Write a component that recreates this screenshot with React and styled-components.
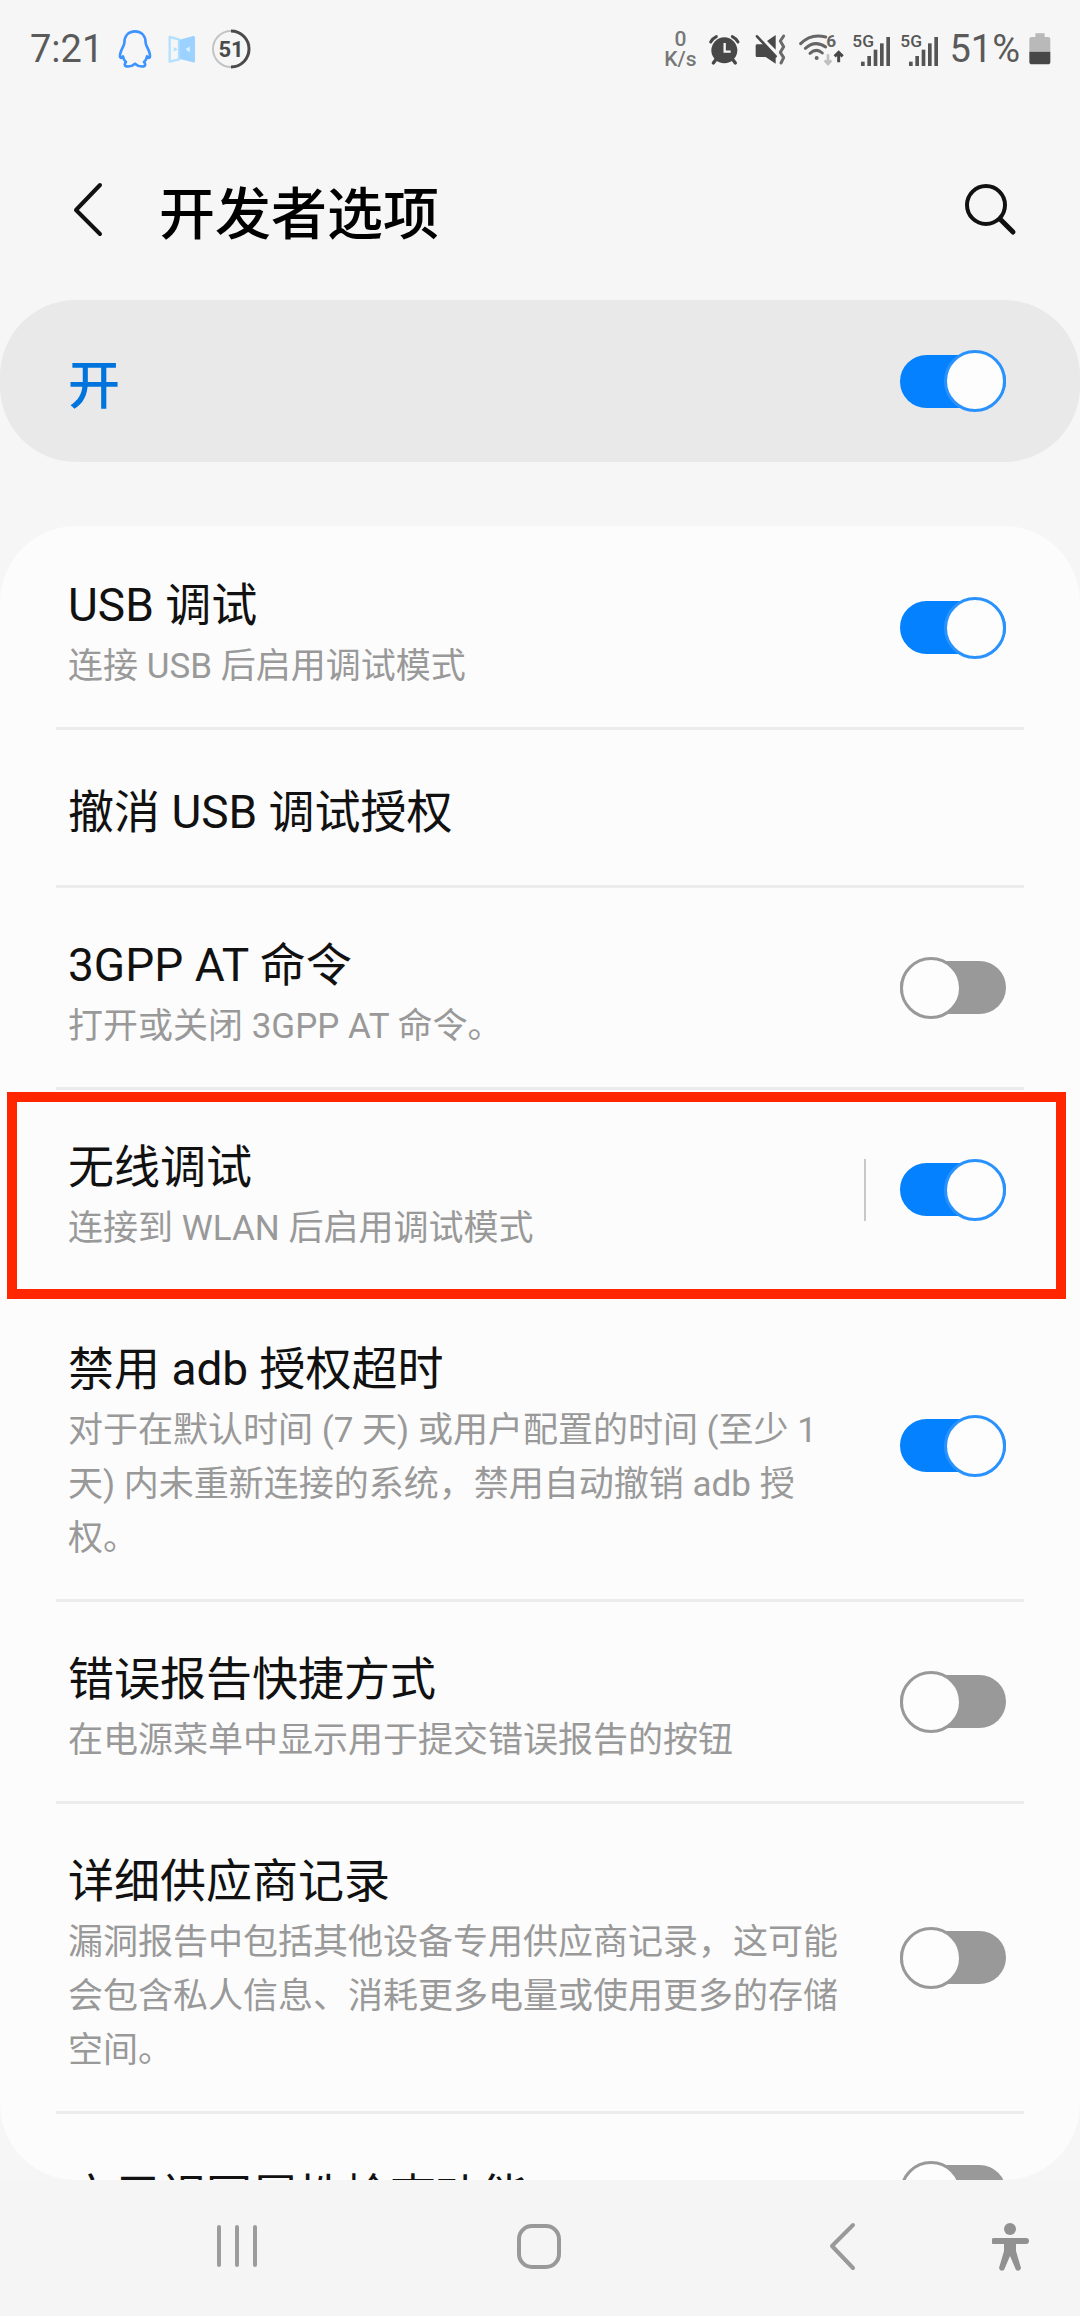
import React, { useState } from "react";
import styled, { createGlobalStyle } from "styled-components";

const GlobalStyle = createGlobalStyle`
  *,
  *::before,
  *::after {
    box-sizing: border-box;
  }

  body {
    margin: 0;
    background-color: #f6f6f6;
    font-family: Roboto, "Noto Sans CJK SC", sans-serif;
  }
`;

const ScreenStyled = styled.div`
  display: flex;
  flex-direction: column;
  height: 100vh;
`;

const StatusBarStyled = styled.div`
  flex: none;
  display: flex;
  justify-content: space-between;
  height: 98px;
  padding: 0 28px 0 30px;
  color: #5a5a5a;
  font-size: 38px;

  svg {
    display: block;
    flex: none;
  }
`;

const StatusGroup = styled.div`
  display: flex;
  align-items: center;
  gap: ${(props) => props.$gap}px;
`;

const NetSpeed = styled.div`
  width: 38px;
  text-align: center;
  font-size: 21px;
  font-weight: 500;
  line-height: 20px;
  color: #777;
`;

const HeaderStyled = styled.header`
  flex: none;
  display: flex;
  align-items: center;
  height: 202px;
  padding: 22px 62px 0 66px;

  h1 {
    flex: 1;
    margin: 0;
    padding: 10px 0 0 49px;
    color: #000;
    font-size: 56px;
    font-weight: 500;
    line-height: 72px;
  }
`;

const IconButton = styled.button`
  display: flex;
  align-items: center;
  justify-content: center;
  padding: 0;
  border: 0;
  background: none;
  color: ${(props) => props.$color || "#111"};
  cursor: pointer;
`;

const MasterBar = styled.label`
  flex: none;
  display: flex;
  align-items: center;
  justify-content: space-between;
  height: 162px;
  margin-bottom: 64px;
  padding: 0 74px 0 68px;
  border-radius: 76px;
  background-color: #e9e9e9;
  color: #0074dd;
  font-size: 52px;
  font-weight: 500;
`;

const Switch = styled.input.attrs({ type: "checkbox", role: "switch" })`
  appearance: none;
  flex: none;
  display: flex;
  align-items: center;
  justify-content: flex-start;
  width: 106px;
  height: 53px;
  margin: 0;
  border-radius: 27px;
  background-color: #999;
  cursor: pointer;

  &::after {
    content: "";
    flex: none;
    width: 62px;
    height: 62px;
    border: 3px solid #999;
    border-radius: 50%;
    background-color: #fdfdfd;
  }

  &:checked {
    justify-content: flex-end;
    background-color: #0381fe;
  }

  &:checked::after {
    border-color: #2a92fe;
  }
`;

const List = styled.ul`
  flex: 1;
  min-height: 0;
  margin: 0;
  padding: 2px 56px 0;
  overflow-y: auto;
  scrollbar-width: none;
  border-radius: 76px;
  background-color: #fcfcfc;
  list-style: none;
`;

const Row = styled.li`
  position: relative;
  display: flex;
  align-items: center;
  min-height: 158px;
  padding: 0 18px 0 12px;
  border-bottom: 3px solid #ececec;
`;

const RowText = styled.div`
  flex: 1;
  padding: 42px 36px 33px 0;

  label,
  button {
    display: block;
    padding: 0;
    border: 0;
    background: none;
    color: #111;
    font-family: inherit;
    font-size: 46px;
    line-height: 70px;
    text-align: left;
  }

  p {
    margin: 0;
    color: #999;
    font-size: 35px;
    line-height: 54px;
  }
`;

const Separator = styled.span`
  width: 2px;
  height: 62px;
  margin-right: 34px;
  background-color: #c8c8c8;
`;

const Highlight = styled.div`
  position: absolute;
  z-index: 1;
  top: 2px;
  right: -42px;
  bottom: -10px;
  left: -49px;
  border: 10px solid #ff2600;
  pointer-events: none;
`;

const NavBar = styled.nav`
  flex: none;
  display: grid;
  grid-template-columns: repeat(3, 1fr) 38px;
  height: 136px;
  padding: 0 50px 4px 86px;
  background-color: #f5f5f5;
`;

const settings = [
  {
    id: "usb",
    title: "USB 调试",
    desc: "连接 USB 后启用调试模式",
    on: true,
  },
  { id: "revoke", title: "撤消 USB 调试授权", action: true },
  {
    id: "at",
    title: "3GPP AT 命令",
    desc: "打开或关闭 3GPP AT 命令。",
    on: false,
  },
  {
    id: "wireless",
    title: "无线调试",
    desc: "连接到 WLAN 后启用调试模式",
    on: true,
    separator: true,
    highlight: true,
  },
  {
    id: "adb",
    title: "禁用 adb 授权超时",
    desc: "对于在默认时间 (7 天) 或用户配置的时间 (至少 1 天) 内未重新连接的系统，禁用自动撤销 adb 授权。",
    on: true,
  },
  {
    id: "bugreport",
    title: "错误报告快捷方式",
    desc: "在电源菜单中显示用于提交错误报告的按钮",
    on: false,
  },
  {
    id: "vendor",
    title: "详细供应商记录",
    desc: "漏洞报告中包括其他设备专用供应商记录，这可能会包含私人信息、消耗更多电量或使用更多的存储空间。",
    on: false,
  },
  { id: "attributes", title: "启用视图属性检查功能", on: false },
];

function QQIcon() {
  return (
    <svg width="36" height="40" viewBox="0 0 108 120" fill="none">
      <path
        d="M54 7C34 7 22 21 22 42C22 51 8 66 9 82C10 90 16 86 18 82C19 90 22 95 27 99C22 104 22 111 28 112C38 114 46 111 54 104C62 111 70 114 80 112C86 111 86 104 81 99C86 95 89 90 90 82C92 86 98 90 99 82C100 66 86 51 86 42C86 21 74 7 54 7Z"
        stroke="#3d93ff"
        strokeWidth="8"
        strokeLinejoin="round"
      />
    </svg>
  );
}

function BookIcon() {
  return (
    <svg width="30" height="40" viewBox="0 0 90 120" fill="none">
      <path d="M8 24L36 31V91L8 98Z" stroke="#b3e0ff" strokeWidth="7" strokeLinejoin="round" />
      <path d="M38 32L78 21Q84 20 84 26V96Q84 102 78 100L38 90Z" fill="#9bd2ff" />
      <path d="M20 54L32 61L20 68Z" fill="#b3e0ff" />
      <path d="M68 52L56 61L68 70Z" fill="#dff2ff" />
    </svg>
  );
}

function BatteryCircle() {
  return (
    <svg width="40" height="40" viewBox="0 0 40 40" fill="none">
      <circle cx="20" cy="20" r="18" stroke="#c4c4c4" strokeWidth="2" />
      <path d="M20 2A18 18 0 0 1 20 38" stroke="#4a4a4a" strokeWidth="3" />
      <text x="20" y="28" textAnchor="middle" fontSize="22" fontWeight="700" fill="#4a4a4a">
        51
      </text>
    </svg>
  );
}

function AlarmIcon() {
  return (
    <svg width="38" height="40" viewBox="0 0 114 120" fill="none">
      <circle cx="52" cy="64" r="39" fill="#484848" />
      <path
        d="M11 39Q17 28 28 23M93 39Q87 28 76 23"
        stroke="#484848"
        strokeWidth="9"
        strokeLinecap="round"
      />
      <path d="M28 90L19 102M76 90L85 102" stroke="#484848" strokeWidth="10" strokeLinecap="round" />
      <path d="M53 42V68H71" stroke="#f6f6f6" strokeWidth="7" />
    </svg>
  );
}

function MuteIcon() {
  return (
    <svg width="38" height="40" viewBox="0 0 114 120" fill="none">
      <path d="M8 50Q8 46 12 46H30L68 84V104L38 84H12Q8 84 8 80Z" fill="#484848" />
      <path d="M42 36L68 18V62Z" fill="#484848" />
      <path d="M12 22L68 82" stroke="#484848" strokeWidth="8" strokeLinecap="round" />
      <path
        d="M92 21L82 36L92 53L82 70L92 86L84 102"
        stroke="#6a6a6a"
        strokeWidth="9"
        strokeLinecap="round"
        strokeLinejoin="round"
      />
    </svg>
  );
}

function WifiIcon() {
  return (
    <svg width="46" height="40" viewBox="0 0 138 120" fill="none">
      <path d="M5 44Q36 12 80 24" stroke="#666" strokeWidth="9" strokeLinecap="round" />
      <path
        d="M19 58Q48 32 80 54M33 73Q52 56 70 72"
        stroke="#666"
        strokeWidth="9"
        strokeLinecap="round"
      />
      <circle cx="53" cy="87" r="6" fill="#666" />
      <text x="97" y="55" textAnchor="middle" fontSize="52" fontWeight="700" fill="#666">
        6
      </text>
      <path d="M87 76V104M77 94L87 105L97 94" stroke="#c0c0c0" strokeWidth="8" />
      <path d="M119 100V70M107 82L119 70L131 82" stroke="#484848" strokeWidth="9" />
    </svg>
  );
}

function SignalIcon() {
  return (
    <svg width="40" height="40" viewBox="0 0 120 120">
      <text x="-2" y="53" fontSize="52" fontWeight="500" fill="#555">
        5G
      </text>
      <g fill="#555">
        <rect x="24" y="98" width="11" height="13" />
        <rect x="43" y="81" width="11" height="30" />
        <rect x="62" y="62" width="11" height="49" />
        <rect x="81" y="43" width="11" height="68" />
        <rect x="100" y="24" width="11" height="87" />
      </g>
    </svg>
  );
}

function BatteryIcon() {
  return (
    <svg width="24" height="40" viewBox="0 0 72 120">
      <path d="M22 13H50V24H60Q67 24 67 31V68H4V31Q4 24 11 24H22Z" fill="#b9b9b9" />
      <path d="M4 68H67V98Q67 106 59 106H12Q4 106 4 98Z" fill="#474747" />
    </svg>
  );
}

function StatusBar() {
  return (
    <StatusBarStyled>
      <StatusGroup $gap={14}>
        <span>7:21</span>
        <QQIcon />
        <BookIcon />
        <BatteryCircle />
      </StatusGroup>
      <StatusGroup $gap={8}>
        <NetSpeed>
          <div>0</div>
          <div>K/s</div>
        </NetSpeed>
        <AlarmIcon />
        <MuteIcon />
        <WifiIcon />
        <SignalIcon />
        <SignalIcon />
        <span>51%</span>
        <BatteryIcon />
      </StatusGroup>
    </StatusBarStyled>
  );
}

function Header() {
  return (
    <HeaderStyled>
      <IconButton aria-label="返回">
        <svg width="44" height="60" viewBox="0 0 44 60" fill="none">
          <path
            d="M34 5L10 30L34 54"
            stroke="currentColor"
            strokeWidth="4"
            strokeLinecap="round"
            strokeLinejoin="round"
          />
        </svg>
      </IconButton>
      <h1>开发者选项</h1>
      <IconButton aria-label="搜索">
        <svg width="56" height="56" viewBox="0 0 56 56" fill="none">
          <circle cx="24" cy="23" r="19" stroke="currentColor" strokeWidth="4" />
          <path d="M38 37L51 50" stroke="currentColor" strokeWidth="5" strokeLinecap="round" />
        </svg>
      </IconButton>
    </HeaderStyled>
  );
}

function SettingRow({ item, checked, onToggle }) {
  return (
    <Row>
      <RowText>
        {item.action ? (
          <button type="button">{item.title}</button>
        ) : (
          <label htmlFor={item.id}>{item.title}</label>
        )}
        {item.desc && <p>{item.desc}</p>}
      </RowText>
      {item.separator && <Separator />}
      {!item.action && (
        <Switch id={item.id} checked={checked} onChange={() => onToggle(item.id)} />
      )}
      {item.highlight && <Highlight />}
    </Row>
  );
}

function BottomNav() {
  return (
    <NavBar>
      <IconButton $color="#9c9c9c" aria-label="最近">
        <svg width="44" height="48" viewBox="0 0 44 48" fill="none">
          <path
            d="M4 5V43M22 5V43M40 5V43"
            stroke="currentColor"
            strokeWidth="4"
            strokeLinecap="round"
          />
        </svg>
      </IconButton>
      <IconButton $color="#999" aria-label="主页">
        <svg width="48" height="48" viewBox="0 0 48 48" fill="none">
          <rect x="4" y="4" width="40" height="41" rx="13" stroke="currentColor" strokeWidth="4" />
        </svg>
      </IconButton>
      <IconButton $color="#999" aria-label="返回上一页">
        <svg width="32" height="52" viewBox="0 0 32 52" fill="none">
          <path
            d="M28 5L7 26L28 48"
            stroke="currentColor"
            strokeWidth="4"
            strokeLinecap="round"
            strokeLinejoin="round"
          />
        </svg>
      </IconButton>
      <IconButton $color="#919191" aria-label="辅助功能">
        <svg width="38" height="50" viewBox="0 0 38 50" fill="none">
          <circle cx="18" cy="8" r="6" fill="currentColor" />
          <path d="M2 20H34" stroke="currentColor" strokeWidth="6" strokeLinecap="round" />
          <path
            d="M12 21H24V30L29 47Q28 51 24 49L18 35L12 49Q8 51 7 47L12 30Z"
            fill="currentColor"
          />
        </svg>
      </IconButton>
    </NavBar>
  );
}

export default function App() {
  const [enabled, setEnabled] = useState(true);
  const [values, setValues] = useState(() =>
    Object.fromEntries(settings.map((item) => [item.id, !!item.on]))
  );

  const handleToggle = (id) => {
    setValues((prev) => ({ ...prev, [id]: !prev[id] }));
  };

  return (
    <ScreenStyled>
      <GlobalStyle />
      <StatusBar />
      <Header />
      <MasterBar>
        开
        <Switch checked={enabled} onChange={() => setEnabled(!enabled)} />
      </MasterBar>
      <List>
        {settings.map((item) => (
          <SettingRow
            key={item.id}
            item={item}
            checked={values[item.id]}
            onToggle={handleToggle}
          />
        ))}
      </List>
      <BottomNav />
    </ScreenStyled>
  );
}
